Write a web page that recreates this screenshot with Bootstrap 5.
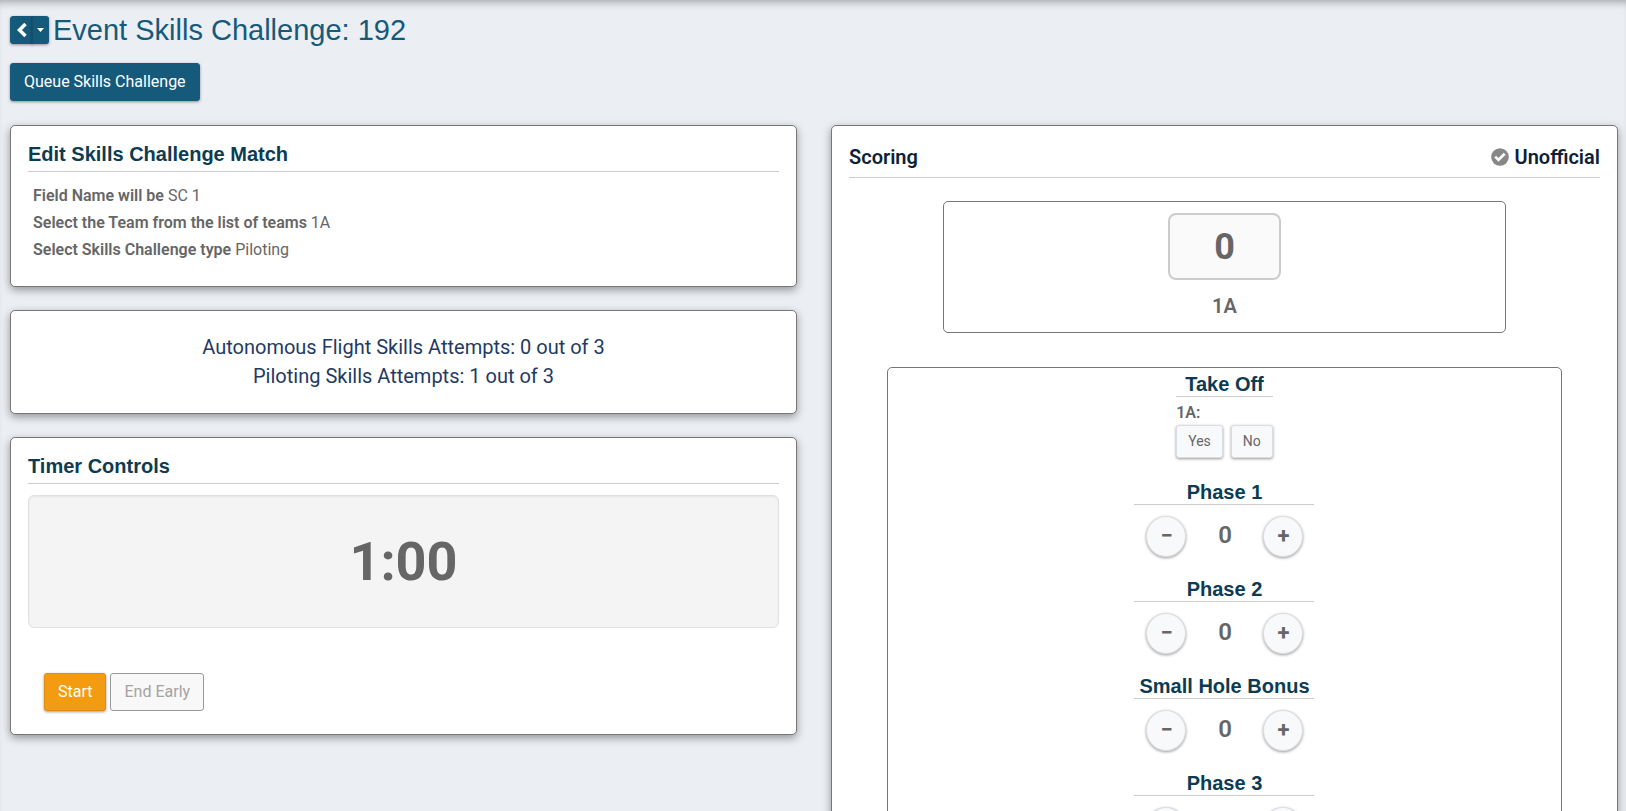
<!DOCTYPE html>
<html lang="en">
<head>
<meta charset="utf-8">
<meta name="viewport" content="width=device-width, initial-scale=1">
<title>Event Skills Challenge: 192</title>
<link href="https://cdn.jsdelivr.net/npm/bootstrap@5.3.0/dist/css/bootstrap.min.css" rel="stylesheet">
<style>
  body { background: #ebeef3; color: #666; font: 400 16px/27px Roboto, sans-serif; }
  .page { height: 100vh; overflow: hidden auto; scrollbar-width: none; padding: 15px 8px 24px 10px; box-shadow: inset 0 8px 8px -6px rgba(0,0,0,.32); }
  .page-title { font: 400 29px/30px "Liberation Sans", Arial, sans-serif; color: #165a7b; }
  .section-title { font: 700 20px/24px "Liberation Sans", Arial, sans-serif; color: #0b3c53; margin: 0; }
  .ruled { border-bottom: 1px solid #ccc; }
  .panel-title { padding-bottom: 5px; }

  .btn { font-size: 16px; line-height: 24px; padding: 6px 13px; border-radius: 3px; box-shadow: 0 1px 3px rgba(0,0,0,.4); }
  .btn-main { --bs-btn-color: #fff; --bs-btn-bg: #165a7b; --bs-btn-border-color: #165a7b; --bs-btn-hover-color: #fff; --bs-btn-hover-bg: #114862; }
  .btn-group .btn-main + .btn-main { border-left-color: #13506d; }
  .btn-mini { height: 28px; padding: 0 5px; display: flex; align-items: center; justify-content: center; }
  .btn-queue { margin: 18px 0 24px; }
  .btn-go { --bs-btn-color: #fff; --bs-btn-bg: #f39c12; --bs-btn-border-color: #e08e0b; --bs-btn-hover-color: #fff; --bs-btn-hover-bg: #e08e0b; }
  .btn-off, .btn-off:disabled { color: #a3a3a3; background: #f8f8f8; border-color: #999; opacity: 1; box-shadow: none; }
  .btn-soft { --bs-btn-color: #666; --bs-btn-bg: #f8f9fb; --bs-btn-border-color: #dcdde0; --bs-btn-hover-bg: #eceef0; }
  .btn-choice { font-size: 14px; line-height: 21px; padding: 5px 11px; }
  .btn-round { width: 40px; height: 41px; padding: 0 0 2px; border-radius: 50%; font-size: 22px; font-weight: 700; display: flex; align-items: center; justify-content: center; }

  .panel { background: #fff; border: 1px solid #777; border-radius: 5px; padding: 16px 17px; box-shadow: 0 3px 9px rgba(0,0,0,.38); }
  .col-start { padding-right: 17px; row-gap: 23px; }
  .col-end { padding-left: 17px; }
  .details { padding: 10px 5px 7px; }
  .details dt, .details dd { display: inline; margin: 0; }
  .details dt { font-weight: 600; }
  .attempts { font-size: 20px; line-height: 29px; color: #1f3a63; padding: 22px 17px; }
  .clock { background: #f4f4f4; border: 1px solid #e0e0e0; border-radius: 6px; box-shadow: inset 0 1px 2px rgba(0,0,0,.06); font-size: 54px; line-height: 60px; font-weight: 700; margin-top: 11px; padding: 36px 0 35px; }
  .timer-buttons { margin-top: 45px; padding: 0 16px 7px; }

  .scoring { padding-top: 19px; }
  .status-title { font-size: 20px; line-height: 24px; font-weight: 600; color: #0e1f38; margin: 0; }
  .status-icon { margin-right: 6px; }
  .outline-box { border: 1px solid #777; border-radius: 5px; }
  .box-score { margin-top: 23px; padding: 11px 0 14px; }
  .score { width: 113px; border: 2px solid #ccc; border-radius: 8px; background: #fafafa; font-size: 36px; line-height: 61px; font-weight: 700; margin-bottom: 14px; padding-top: 2px; }
  .team { font-size: 20px; line-height: 24px; font-weight: 600; }
  .box-phases { width: 90%; margin-top: 34px; padding: 4px 0 20px; }
  .takeoff { margin-bottom: 22px; }
  .team-label { font-weight: 600; line-height: 24px; padding-top: 4px; }
  .counter { width: 180px; }
  .counter-row { padding: 11px 11px 20px 12px; }
  .counter-value { font-size: 24px; line-height: 30px; font-weight: 600; padding-bottom: 3px; }
</style>
</head>
<body>
<main class="page">
  <header class="d-flex align-items-center gap-1">
    <div class="btn-group">
      <button class="btn btn-main btn-mini" type="button" aria-label="Back">
        <svg width="11" height="16" viewBox="0 0 11 16" aria-hidden="true"><path d="M9.500 2 3.500 8l6 6" fill="none" stroke="#fff" stroke-width="3.500"/></svg>
      </button>
      <button class="btn btn-main btn-mini px-1" type="button" aria-label="More" data-bs-toggle="dropdown">
        <svg width="7" height="4" viewBox="0 0 7 4" aria-hidden="true"><path d="M0 0h7L3.500 4z" fill="#fff"/></svg>
      </button>
    </div>
    <h1 class="page-title m-0">Event Skills Challenge: 192</h1>
  </header>
  <button class="btn btn-main btn-queue" type="button">Queue Skills Challenge</button>

  <div class="row g-0 align-items-start">
    <div class="col-6 col-start d-grid">
      <section class="panel">
        <h2 class="section-title panel-title ruled">Edit Skills Challenge Match</h2>
        <dl class="details mb-0">
          <div><dt>Field Name will be</dt> <dd>SC 1</dd></div>
          <div><dt>Select the Team from the list of teams</dt> <dd>1A</dd></div>
          <div><dt>Select Skills Challenge type</dt> <dd>Piloting</dd></div>
        </dl>
      </section>
      <section class="panel attempts text-center">
        <div>Autonomous Flight Skills Attempts: 0 out of 3</div>
        <div>Piloting Skills Attempts: 1 out of 3</div>
      </section>
      <section class="panel">
        <h2 class="section-title panel-title ruled">Timer Controls</h2>
        <div class="clock text-center">1:00</div>
        <div class="timer-buttons d-flex gap-1">
          <button class="btn btn-go" type="button">Start</button>
          <button class="btn btn-off" type="button" disabled>End Early</button>
        </div>
      </section>
    </div>

    <div class="col-6 col-end">
      <section class="panel scoring">
        <div class="ruled d-flex justify-content-between pb-2">
          <h2 class="status-title">Scoring</h2>
          <h2 class="status-title d-flex align-items-center">
            <svg class="status-icon" width="18" height="18" viewBox="0 0 18 18" aria-hidden="true"><circle cx="9" cy="9" r="8.800" fill="#888"/><path d="m4.200 8.600 3.300 3.300 6.200-6.200" fill="none" stroke="#fff" stroke-width="2.700"/></svg>
            Unofficial
          </h2>
        </div>
        <div class="outline-box box-score w-75 mx-auto text-center">
          <div class="score mx-auto">0</div>
          <div class="team">1A</div>
        </div>
        <div class="outline-box box-phases mx-auto d-flex flex-column align-items-center">
          <div class="takeoff">
            <h3 class="section-title ruled text-center">Take Off</h3>
            <div class="team-label">1A:</div>
            <div class="d-flex gap-2">
              <button class="btn btn-soft btn-choice" type="button">Yes</button>
              <button class="btn btn-soft btn-choice" type="button">No</button>
            </div>
          </div>
          <div class="counter">
            <h3 class="section-title ruled text-center">Phase 1</h3>
            <div class="counter-row d-flex justify-content-between align-items-center">
              <button class="btn btn-soft btn-round" type="button" aria-label="Decrease">−</button>
              <span class="counter-value">0</span>
              <button class="btn btn-soft btn-round" type="button" aria-label="Increase">+</button>
            </div>
          </div>
          <div class="counter">
            <h3 class="section-title ruled text-center">Phase 2</h3>
            <div class="counter-row d-flex justify-content-between align-items-center">
              <button class="btn btn-soft btn-round" type="button" aria-label="Decrease">−</button>
              <span class="counter-value">0</span>
              <button class="btn btn-soft btn-round" type="button" aria-label="Increase">+</button>
            </div>
          </div>
          <div class="counter">
            <h3 class="section-title ruled text-center">Small Hole Bonus</h3>
            <div class="counter-row d-flex justify-content-between align-items-center">
              <button class="btn btn-soft btn-round" type="button" aria-label="Decrease">−</button>
              <span class="counter-value">0</span>
              <button class="btn btn-soft btn-round" type="button" aria-label="Increase">+</button>
            </div>
          </div>
          <div class="counter">
            <h3 class="section-title ruled text-center">Phase 3</h3>
            <div class="counter-row d-flex justify-content-between align-items-center">
              <button class="btn btn-soft btn-round" type="button" aria-label="Decrease">−</button>
              <span class="counter-value">0</span>
              <button class="btn btn-soft btn-round" type="button" aria-label="Increase">+</button>
            </div>
          </div>
        </div>
      </section>
    </div>
  </div>
</main>
<script src="https://cdn.jsdelivr.net/npm/bootstrap@5.3.0/dist/js/bootstrap.bundle.min.js"></script>
</body>
</html>
